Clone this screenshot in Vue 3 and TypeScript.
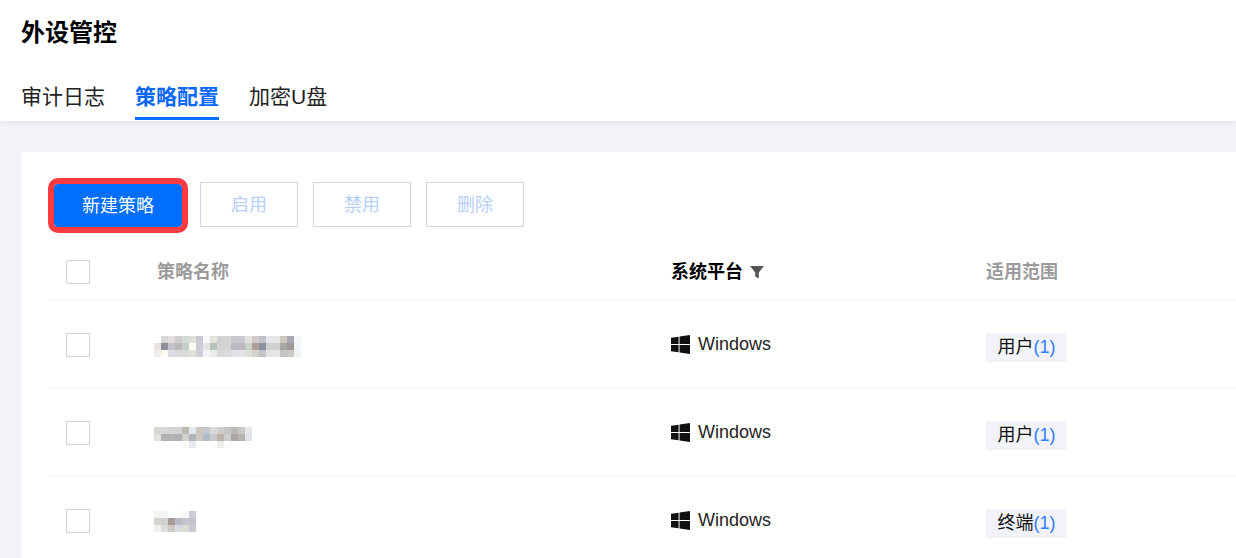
<script setup lang="ts">
const tabs = [
  { label: '审计日志', active: false },
  { label: '策略配置', active: true },
  { label: '加密U盘', active: false },
]
const mosaics: string[][] = [
  ['#fff','#d8d8d8','#e6dedd','#cfcfcf','#d3dad6','#e0e0d8','#c9c9d3','#f6f8fb','#e3e5e0','#d2d2d2','#d4d4d4','#cbc9cf','#cbc9cf','#e0e0de','#cfc9c8','#bcc2c8','#e6e6e6','#e6e6e6','#cfc8bf','#a9a7b8','#f3f7fa',
   '#ebe3dd','#8d8e9b','#c6c3c6','#b9b8ba','#c5d0cc','#fffff0','#cdcdd9','#e5e5df','#b4c4ba','#d2d2d2','#d4d4d4','#bcb9c2','#bcb9c2','#c9d2c8','#b0a09a','#8a929e','#cfcfcf','#cfcfcf','#a9a6a2','#9f9a98','#f1f5f7',
   '#eceeee','#fdf9f1','#dadde3','#d9d9d9','#dbdcd8','#dfe0da','#cfcfd9','#f2f5f8','#e8ece8','#d9d7d9','#dadada','#e2e2e6','#e4e3ea','#dfdfda','#d4d2cd','#bfc5cb','#e3e3e3','#e6e8e8','#c1c3c2','#cdc8c2','#edf3f7'],
  ['#d5d5d2','#d8d8d6','#d4d4d4','#d4d4d4','#bfb8b0','#e2e9ee','#ccc4bf','#c3c8cc','#dcd8d6','#d0cdca','#c2c4c5','#bcb8b4','#c6c8c6','#e5e8eb',
   '#e2e2de','#b4b4b2','#b7b5b3','#aeb0b3','#d0d2cc','#b3b5bd','#cfc8c2','#aebcc6','#c8ccd0','#bdb3ad','#cdcdcd','#aaa4a2','#b6b2b0','#dfe3e7',
   '#fff','#fff','#fff','#fff','#faf8f5','#e6ebef','#fff','#fff','#fff','#f0eeed','#fff','#fff','#fff','#fff'],
  ['#f3f3f1','#f3f3f1','#fff','#fff','#f9f7f5','#ccccd4',
   '#d3d2cd','#d0d0cc','#a59a95','#b6bac4','#c3c5cb','#c4c4cc',
   '#eeeeea','#dddddb','#cfc9c5','#d6dde2','#dedbd5','#c8c8d0'],
]
const rows = [
  { scope: '用户', cols: 21, m: 0, top: 3 },
  { scope: '用户', cols: 14, m: 1, top: 9 },
  { scope: '终端', cols: 6, m: 2, top: 1 },
]
</script>

<template>
  <div class="page">
    <header class="top">
      <h1 class="title">外设管控</h1>
      <nav class="tabs">
        <span v-for="t in tabs" :key="t.label" class="tab" :class="{ active: t.active }">{{ t.label }}</span>
      </nav>
    </header>
    <main class="body">
      <section class="panel">
        <div class="toolbar">
          <button class="btn primary">新建策略</button>
          <button class="btn">启用</button>
          <button class="btn">禁用</button>
          <button class="btn">删除</button>
        </div>
        <div class="row head">
          <div class="cell"><span class="check"></span></div>
          <div class="cell muted">策略名称</div>
          <div class="cell strong">
            系统平台
            <svg class="filter" viewBox="0 0 14 14" width="14" height="14"><path d="M0 1h14L8.800 7.400V13.600L5.200 11.600V7.400z" fill="#555" /></svg>
          </div>
          <div class="cell muted">适用范围</div>
        </div>
        <div v-for="(r, i) in rows" :key="i" class="row">
          <div class="cell"><span class="check"></span></div>
          <div class="cell">
            <div class="mosaic" :style="{ gridTemplateColumns: `repeat(${r.cols}, 7px)`, marginTop: r.top + 'px' }">
              <i v-for="(c, k) in mosaics[r.m]" :key="k" :style="{ background: c }"></i>
            </div>
          </div>
          <div class="cell platform">
            <svg class="win" viewBox="0 0 20 20" width="19" height="19"><path d="M0 3l8-1.200v7.700H0zM9 1.700L20 0v9.500H9zM0 10.500h8v7.700L0 17zM9 10.500h11V20L9 18.300z" fill="#111" /></svg>
            <span>Windows</span>
          </div>
          <div class="cell">
            <span class="tag">{{ r.scope }}<em>(1)</em></span>
          </div>
        </div>
      </section>
    </main>
  </div>
</template>

<style>
html, body { margin: 0; height: 100%; overflow: hidden; background: #f2f3f8; }
</style>

<style scoped>
.page {
  width: 1236px;
  height: 558px;
  overflow: hidden;
  background: #f2f3f8;
  font-family: "Liberation Sans", "Noto Sans CJK SC", sans-serif;
  color: #1a1a1a;
}
.top {
  height: 121px;
  box-sizing: border-box;
  padding: 15px 0 0 21px;
  background: #fff;
  box-shadow: 0 2px 5px rgba(0, 0, 0, 0.06);
  position: relative;
}
.title {
  margin: 0;
  font-size: 24px;
  line-height: 36px;
  font-weight: 700;
  color: #000;
}
.tabs {
  display: flex;
  gap: 30px;
  margin-top: 29px;
}
.tab {
  font-size: 21px;
  line-height: 34px;
  height: 40px;
  box-sizing: border-box;
  color: #222;
}
.tab.active {
  color: #0a68ff;
  font-weight: 700;
  border-bottom: 3px solid #006eff;
}
.body {
  padding: 31px 0 0 21px;
}
.panel {
  background: #fff;
  padding: 30px 0 0 30px;
  height: 400px;
}
.toolbar {
  display: flex;
  gap: 15px;
  padding-left: 3px;
  align-items: flex-end;
}
.btn {
  width: 98px;
  height: 45px;
  box-sizing: border-box;
  background: #fff;
  border: 1px solid #cfd7e6;
  color: #b5d0fb;
  font: inherit;
  font-size: 18px;
  padding: 0 0 4px;
}
.btn.primary {
  width: 128px;
  height: 43px;
  margin-right: 3px;
  background: #006eff;
  border: none;
  color: #fff;
  border-radius: 4px;
  outline: 6px solid #ff3b3f;
  outline-offset: 0;
}
.row {
  display: grid;
  grid-template-columns: 106px 514px 315px 1fr;
  height: 88px;
  border-bottom: 1px solid #f3f3f3;
  box-sizing: border-box;
  align-items: center;
}
.row.head {
  height: 74px;
  padding-top: 16px;
}
.cell {
  display: flex;
  align-items: center;
  font-size: 18px;
}
.check {
  width: 24px;
  height: 24px;
  margin-left: 15px;
  box-sizing: border-box;
  border: 1px solid #cfd5de;
  background: #fff;
}
.muted {
  color: #9b9b9b;
  font-weight: 700;
  line-height: 26px;
}
.strong {
  color: #000;
  font-weight: 700;
  line-height: 26px;
}
.filter {
  margin-left: 7px;
}
.mosaic {
  display: grid;
  grid-auto-rows: 7px;
  margin-left: -3px;
}
.mosaic i {
  display: block;
  height: 7px;
  filter: blur(0.3px);
}
.platform {
  gap: 8px;
  color: #222;
}
.tag {
  display: inline-block;
  height: 29px;
  line-height: 29px;
  padding: 0 11.500px;
  background: #f2f3f8;
  font-size: 18px;
  color: #111;
  margin-top: 6px;
}
.tag em {
  font-style: normal;
  color: #2f7cf6;
}
</style>
